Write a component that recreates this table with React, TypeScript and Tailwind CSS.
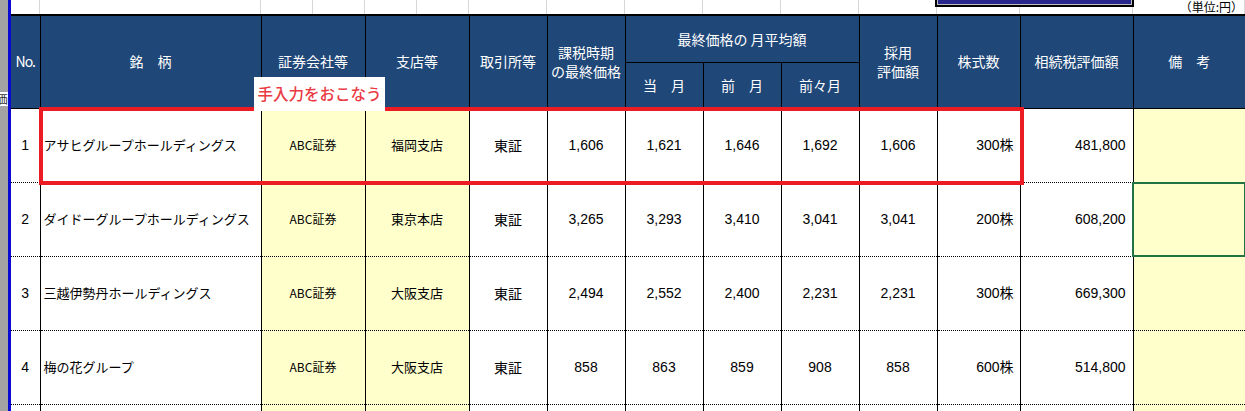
const rows = [
  { no: "1", name: "アサヒグループホールディングス", broker: "ABC証券", branch: "福岡支店", market: "東証", last: "1,606", m0: "1,621", m1: "1,646", m2: "1,692", adopt: "1,606", qty: "300株", value: "481,800" },
  { no: "2", name: "ダイドーグループホールディングス", broker: "ABC証券", branch: "東京本店", market: "東証", last: "3,265", m0: "3,293", m1: "3,410", m2: "3,041", adopt: "3,041", qty: "200株", value: "608,200" },
  { no: "3", name: "三越伊勢丹ホールディングス", broker: "ABC証券", branch: "大阪支店", market: "東証", last: "2,494", m0: "2,552", m1: "2,400", m2: "2,231", adopt: "2,231", qty: "300株", value: "669,300" },
  { no: "4", name: "梅の花グループ", broker: "ABC証券", branch: "大阪支店", market: "東証", last: "858", m0: "863", m1: "859", m2: "908", adopt: "858", qty: "600株", value: "514,800" },
];

// top strip cells (light grid of the sheet above the table)
const topCells = ["w-[29px]", "w-[221px]", "w-[52px]", "w-[52px]", "w-[52px]", "w-[52px]", "w-[78px]", "w-[78px]", "w-[78px]", "w-[78px]", "w-[78px]", "w-[78px]", "w-[83px]", "w-[113px]", "w-[112px]"];

const th = "border border-black font-normal text-white text-[14px] leading-[19px] text-center align-middle p-0";
const td = "border-r border-b border-black [border-bottom-style:dotted] p-0 align-middle";
const yellow = "bg-[#ffffcc]";
const num = "font-['Liberation_Sans',sans-serif]";

export default function App() {
  return (
    <div className="w-[1245px] h-[411px] overflow-hidden bg-white flex font-['Noto_Sans_CJK_JP',sans-serif] text-black">
      {/* left window edge */}
      <div className="relative w-[8px] shrink-0 bg-[#a3a3a3] overflow-hidden">
        <span className="absolute top-[92px] right-[-3px] whitespace-nowrap text-[12px] leading-[14px] text-[#333] bg-white">株価|</span>
      </div>
      <div className="w-[3px] shrink-0 bg-[#0a0ad2]" />

      <div className="relative flex-1">
        {/* sheet area above the table */}
        <div className="relative flex h-[14px]">
          {topCells.map((w, i) => (
            <div key={i} className={`${w} shrink-0 h-full border-r border-[#d6d6d6]`} />
          ))}
          <div className="absolute left-[924px] top-0 w-[199px] h-[7px] border-2 border-t-0 border-black bg-[#bdbdbd] px-[1px] pb-[1px]">
            <div className="h-full bg-[#26268c]" />
          </div>
          <span className="absolute right-[2px] top-0 whitespace-nowrap text-[12px] leading-[14px] bg-white">（単位:円）</span>
        </div>

        <table className="table-fixed border-collapse w-[1234px] border-t-2 border-black">
          <colgroup>
            <col className="w-[29px]" />
            <col className="w-[221px]" />
            <col className="w-[104px]" />
            <col className="w-[104px]" />
            <col className="w-[78px]" />
            <col className="w-[78px]" />
            <col className="w-[78px]" />
            <col className="w-[78px]" />
            <col className="w-[78px]" />
            <col className="w-[78px]" />
            <col className="w-[83px]" />
            <col className="w-[113px]" />
            <col className="w-[112px]" />
          </colgroup>
          <thead className="bg-[#1f4778]">
            <tr className="h-[47px]">
              <th rowSpan={2} className={`${th} border-l-0 text-[11px] tracking-[-1px]`}>No.</th>
              <th rowSpan={2} className={th}>銘&emsp;柄</th>
              <th rowSpan={2} className={th}>証券会社等</th>
              <th rowSpan={2} className={th}>支店等</th>
              <th rowSpan={2} className={th}>取引所等</th>
              <th rowSpan={2} className={th}>課税時期<br />の最終価格</th>
              <th colSpan={3} className={`${th} pt-[1px]`}>最終価格の 月平均額</th>
              <th rowSpan={2} className={th}>採用<br />評価額</th>
              <th rowSpan={2} className={th}>株式数</th>
              <th rowSpan={2} className={th}>相続税評価額</th>
              <th rowSpan={2} className={`${th} border-r-0`}>備&emsp;考</th>
            </tr>
            <tr className="h-[46px]">
              <th className={th}>当&emsp;月</th>
              <th className={th}>前&emsp;月</th>
              <th className={th}>前々月</th>
            </tr>
          </thead>
          <tbody className="text-[14px]">
            {rows.map((r) => (
              <tr key={r.no} className="h-[74px]">
                <td className={`${td} text-center ${num}`}>{r.no}</td>
                <td className={`${td} pl-[3px] text-[13px] whitespace-nowrap overflow-hidden`}>{r.name}</td>
                <td className={`${td} ${yellow} text-center text-[12px]`}>{r.broker}</td>
                <td className={`${td} ${yellow} text-center text-[13px]`}>{r.branch}</td>
                <td className={`${td} text-center`}>{r.market}</td>
                <td className={`${td} text-center ${num}`}>{r.last}</td>
                <td className={`${td} text-center ${num}`}>{r.m0}</td>
                <td className={`${td} text-center ${num}`}>{r.m1}</td>
                <td className={`${td} text-center ${num}`}>{r.m2}</td>
                <td className={`${td} text-center ${num}`}>{r.adopt}</td>
                <td className={`${td} text-right pr-[6px] font-['Liberation_Sans','Noto_Sans_CJK_JP',sans-serif]`}>{r.qty}</td>
                <td className={`${td} text-right pr-[7px] ${num}`}>{r.value}</td>
                <td className={`${td} ${yellow} border-r-0`} />
              </tr>
            ))}
            <tr className="h-[20px]">
              <td className={td} />
              <td className={td} />
              <td className={`${td} ${yellow}`} />
              <td className={`${td} ${yellow}`} />
              <td className={td} />
              <td className={td} />
              <td className={td} />
              <td className={td} />
              <td className={td} />
              <td className={td} />
              <td className={td} />
              <td className={td} />
              <td className={`${td} ${yellow} border-r-0`} />
            </tr>
          </tbody>
        </table>

        {/* selected cell */}
        <div className="absolute left-[1121px] top-[182px] w-[114px] h-[75px] border-2 border-[#217346]" />

        {/* annotation */}
        <div className="absolute left-[28px] top-[107px] w-[985px] h-[78px] border-4 border-[#ec1c24]" />
        <div className="absolute left-[243px] top-[77px] w-[131px] h-[34px] bg-white flex items-center justify-center whitespace-nowrap text-[15.5px] font-medium text-[#ea3a44]">
          手入力をおこなう
        </div>
      </div>
    </div>
  );
}
